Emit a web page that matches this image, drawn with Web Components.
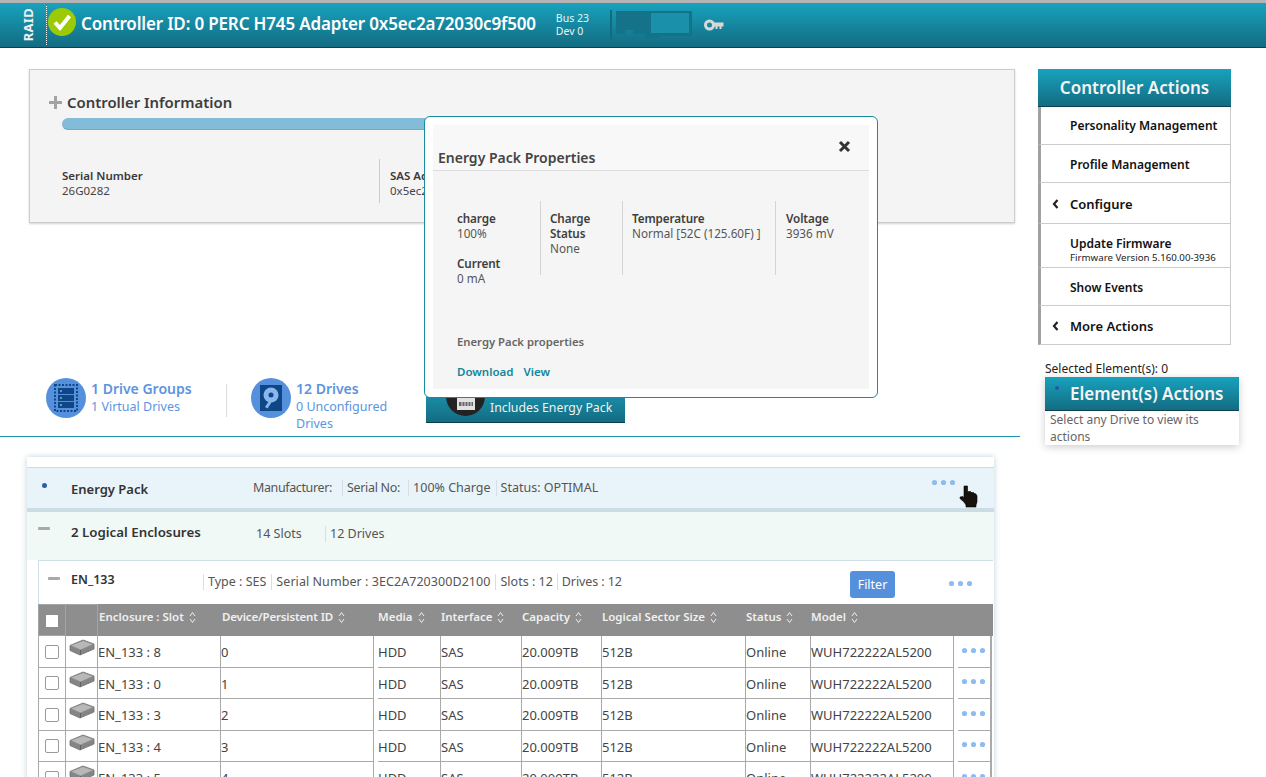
<!DOCTYPE html>
<html lang="en"><head><meta charset="utf-8"><title>RAID</title>
<style>
html,body{margin:0;padding:0;height:777px;overflow:hidden;background:#fff}
body{font-family:"Noto Sans","Open Sans",sans-serif;font-size:12.5px;color:#444;border-top:3px solid #b4b4b4;box-sizing:border-box}
</style></head><body>
<app-shell></app-shell>
<script>
const FONT='"Noto Sans","Open Sans",sans-serif';
function def(name,css,html,init){
  customElements.define(name,class extends HTMLElement{
    constructor(){super();const r=this.attachShadow({mode:'open'});
      r.innerHTML='<style>'+css+'</style>'+(typeof html==='function'?html(this):html);}
    connectedCallback(){
      if(typeof html==='function'){this.shadowRoot.innerHTML='<style>'+css+'</style>'+html(this);}
      if(init)init(this);}
  });
}
const dots=(c='#8fbcf0')=>`<svg width="25" height="7" viewBox="0 0 25 7"><circle cx="3.5" cy="3.5" r="2.6" fill="${c}"/><circle cx="12.5" cy="3.5" r="2.6" fill="${c}"/><circle cx="21.5" cy="3.5" r="2.6" fill="${c}"/></svg>`;
const sort=`<svg width="7" height="13" viewBox="0 0 7 13" fill="none" stroke="#eee" stroke-width="1"><path d="M1 5l2.5-3.500L6 5M1 8l2.500 3.500L6 8"/></svg>`;
const hdd=`<svg width="26" height="17" viewBox="0 0 26 17"><path d="M1 6.500L14 1l11 4v5L11 16 1 11.500z" fill="#858585" stroke="#707070" stroke-width=".8"/><path d="M1.500 6.500L14 1.500l10.500 3.700L11.500 11z" fill="#b8b8b8" stroke="#8a8a8a" stroke-width=".8"/><path d="M11.500 11v4.500" stroke="#5f5f5f"/></svg>`;

def('top-bar',`
:host{display:flex;align-items:center;height:45px;box-sizing:border-box;background:linear-gradient(#18a2bd,#136c82);border-bottom:1px solid #0b4252;color:#fff;font-family:${FONT}}
.raid{width:46px;flex:none;box-sizing:border-box;display:flex;justify-content:flex-end;padding-right:9px}
.raid span{writing-mode:vertical-rl;transform:rotate(180deg);font-size:13px;font-weight:700;letter-spacing:.3px;color:#f0f0f0}
.sep{align-self:stretch;margin:3px 0 2px;border-left:1px dotted #fff;margin-left:0}
svg.ok{margin:-7px 0 0 1px;flex:none}
h1{margin:0 0 4px 5px;font-size:17px;font-weight:600;letter-spacing:-.16px;white-space:nowrap}
.bus{margin-left:20px;font-size:10.5px;line-height:13px;width:54px;flex:none;color:#e8f4f7}
.card{flex:none}.key{margin-left:11px;flex:none}
`,`<div class="raid"><span>RAID</span></div><div class="sep"></div>
<svg class="ok" width="28" height="28" viewBox="0 0 28 28"><ellipse cx="14" cy="14" rx="14" ry="14" fill="#9ccb06"/><path d="M7 14.500l5 5.500 9.500-12" fill="none" stroke="#fff" stroke-width="4"/></svg>
<h1>Controller ID: 0 PERC H745 Adapter 0x5ec2a72030c9f500</h1>
<div class="bus">Bus 23<br>Dev 0</div>
<svg class="card" width="83" height="30" viewBox="0 0 83 30"><path d="M0 0h2v29H0z" fill="#146b80"/><path d="M6 1H82V26H50V28H35V24H23V20H15V24H6Z" fill="#157389"/><rect x="41" y="3" width="38" height="20" fill="#1a90aa"/></svg>
<svg class="key" width="20" height="12" viewBox="0 0 20 12"><circle cx="5.500" cy="6" r="4" fill="none" stroke="#d8d8d8" stroke-width="3"/><path d="M9 3.500h10.500v4h-2v2.500h-2V7.500h-2V10h-2V7.500H9z" fill="#d8d8d8"/></svg>`);

def('info-panel',`
:host{display:block;margin:21px 5px 0 29px;height:154px;box-sizing:border-box;background:#f4f4f4;border:1px solid #ccc;box-shadow:0 1px 2px rgba(0,0,0,.18);padding:22px 19px 0 19px}
h2{margin:0;font-size:14.900px;font-weight:600;color:#3d3d3d;display:flex;align-items:center;gap:5px;line-height:20px}
.bar{height:12px;border-radius:6px;background:#82bcd8;margin:6px 0 0 13px;width:760px;border-bottom:1px solid #6fa9c4;box-sizing:border-box}
.fields{display:flex;margin:29px 0 0 13px;height:44px}
.f{padding-top:9px;font-size:11.500px;line-height:15px;color:#444}
.f b{display:block;font-weight:600;color:#3a3a3a}
.a{width:317px;box-sizing:border-box}.b{border-left:1px solid #ccc;padding-left:10px}
`,`<h2><svg width="13" height="13" viewBox="0 0 13 13"><path d="M5 0h3v5h5v3H8v5H5V8H0V5h5z" fill="#a3a3a3"/></svg>Controller Information</h2>
<div class="bar"></div>
<div class="fields"><div class="f a"><b>Serial Number</b>26G0282</div><div class="f b"><b>SAS Address</b>0x5ec2a72030c9f500</div></div>`);

def('stat-block',`
:host{display:flex;gap:5px;font-family:${FONT};color:#5c94e0;font-size:12.500px;line-height:17px}
.t{width:var(--w,110px)}b{display:block;font-size:14px;font-weight:600;line-height:19px;margin-top:1px}
svg{flex:none}`,el=>`<slot name="icon"></slot><div class="t"><b>${el.getAttribute('title-text')}</b>${el.getAttribute('sub')}</div>`);

def('energy-button',`
:host{display:flex;align-items:center;height:28px;width:199px;box-sizing:border-box;background:linear-gradient(#1a8ea8,#136c82);border-bottom:1px solid #0a3d4c;color:#f2f2f2;font-size:12.300px;overflow:visible;position:relative}
.c{width:39px;height:39px;border-radius:50%;background:#232323;margin:-25px 5px 0 20px;flex:none;display:flex;justify-content:center;align-items:flex-end;padding-bottom:6px;box-sizing:border-box}
span{white-space:nowrap;margin-bottom:3px}`,`<div class="c"><svg width="18" height="20" viewBox="0 0 18 20"><rect x="0" y="0" width="18" height="20" fill="#e2e2e2"/><path d="M2 4h14v4H2zM2 12h14v4H2z" fill="#666"/><path d="M5 4v4M8 4v4M11 4v4M14 4v4M5 12v4M8 12v4M11 12v4M14 12v4" stroke="#ddd" stroke-width="1"/></svg></div><span>Includes Energy Pack</span>`);

def('prop-col',`
:host{display:block;box-sizing:border-box;font-size:11.700px;line-height:15px;color:#555;padding-top:10px}
:host([sep]){border-left:1px solid #d4d4d4;padding-left:9px}
::slotted(b){display:block;font-weight:600;color:#3e3e3e;letter-spacing:-.1px}`,`<slot></slot>`);

def('props-modal',`
:host{position:absolute;left:424px;top:113px;width:454px;height:282px;box-sizing:border-box;background:#fff;border:1px solid #1a8a9e;border-radius:6px;padding:8px;z-index:5;font-family:${FONT}}
.in{background:#f5f5f5;height:264px;display:flex;flex-direction:column}
header{height:45px;background:#f8f8f8;border-bottom:1px solid #ddd;display:flex;justify-content:space-between;align-items:flex-start;box-sizing:content-box}
h3{margin:23px 0 0 5px;font-size:14px;font-weight:600;color:#444;line-height:20px}
svg{margin:15px 18px 0 0}
.cols{display:flex;margin:30px 0 0 24px;align-items:flex-start;height:89px}
.c1{width:83px;height:89px}.c2{width:82px;height:74px}.c3{width:153px;height:74px}.c4{width:70px;height:74px}
.note{margin:44px 0 0 24px;font-size:11.300px;font-weight:600;color:#666;line-height:15px}
.links{margin:15px 0 0 24px;font-size:11.500px;font-weight:600;color:#12879c;display:flex;gap:10px;line-height:15px}
`,`<div class="in"><header><h3>Energy Pack Properties</h3><svg width="13" height="13" viewBox="0 0 13 13"><path d="M2 2l9 9M11 2l-9 9" stroke="#333" stroke-width="3"/></svg></header>
<div class="cols">
<prop-col class="c1"><b>charge</b>100%<br><br><b>Current</b>0 mA</prop-col>
<prop-col class="c2" sep><b>Charge Status</b>None</prop-col>
<prop-col class="c3" sep><b>Temperature</b>Normal [52C (125.60F) ]</prop-col>
<prop-col class="c4" sep style="padding-left:10px"><b>Voltage</b>3936 mV</prop-col>
</div>
<div class="note">Energy Pack properties</div>
<div class="links"><span>Download</span><span>View</span></div></div>`);

def('action-item',`
:host{display:flex;flex-direction:column;justify-content:center;box-sizing:border-box;border-left:3px solid #a0a0a0;border-right:1px solid #ccc;border-bottom:1px solid #ccc;padding:1px 0 0 29px;color:#111;font-size:12px;font-weight:600;position:relative;line-height:15px}
:host([big]){font-size:13px;padding-top:3px}
:host([sub]){padding-top:8px}
small{font-size:9.700px;font-weight:400;line-height:13px;display:block;color:#222}
svg{position:absolute;left:11px;top:50%;margin-top:-4px}
`,el=>`${el.hasAttribute('chev')?'<svg width="7" height="10" viewBox="0 0 7 10"><path d="M5.500 1L2 5l3.500 4" fill="none" stroke="#222" stroke-width="2.200"/></svg>':''}<div>${el.getAttribute('label')}</div>${el.getAttribute('sub')?`<small>${el.getAttribute('sub')}</small>`:''}`);

def('side-panel',`
:host{display:block;padding-top:21px;font-family:${FONT}}
.ca{width:193px;margin-left:18px}
.h{height:38px;background:linear-gradient(#18a2bd,#136c82);border-bottom:1px solid #0b4252;box-sizing:border-box;color:#f4f4f4;font-size:17px;font-weight:600;display:flex;align-items:center;justify-content:center}
.sel{margin:15px 0 0 25px;font-size:12px;line-height:17px;color:#222;height:17px}
.ea{margin:0 0 0 25px;width:194px;box-shadow:0 2px 8px rgba(0,0,0,.2);background:#fff}
.eh{height:34px;background:linear-gradient(#18a2bd,#136c82);border-bottom:1px solid #0b4252;box-sizing:border-box;color:#f4f4f4;font-size:17px;font-weight:600;display:flex;align-items:center;padding-left:25px;position:relative}
.eh i{position:absolute;left:10px;top:9px;width:4px;height:4px;border-radius:50%;background:#2c55a8}
.eb{padding:0 5px;font-size:12px;line-height:17px;color:#666;height:34px;width:170px;box-sizing:content-box}
`,`<div class="ca"><div class="h">Controller Actions</div>
<action-item style="height:38px;padding-top:0" label="Personality Management"></action-item>
<action-item style="height:38px" label="Profile Management"></action-item>
<action-item big chev style="height:41px" label="Configure"></action-item>
<action-item style="height:44px" label="Update Firmware" sub="Firmware Version 5.160.00-3936"></action-item>
<action-item style="height:38px" label="Show Events"></action-item>
<action-item big chev style="height:39px" label="More Actions"></action-item></div>
<div class="sel">Selected Element(s): 0</div>
<div class="ea"><div class="eh"><i></i>Element(s) Actions</div><div class="eb">Select any Drive to view its actions</div></div>`);

const COLS='28px 32px 123px 157px 63px 81px 80px 144px 65px 147px 34px';
def('table-head',`
:host{display:grid;grid-template-columns:${COLS};height:32px;background:#8e8e8e;color:#f0f0f0;font-size:11.500px;font-weight:600}
div{display:flex;align-items:flex-start;gap:5px;padding:4px 0 0 0;line-height:18px;white-space:nowrap;box-sizing:border-box}
.cb{border:1px solid #a4a4a4;padding:0;justify-content:center;align-items:center}
.ic{border-right:1px solid #a4a4a4;border-top:1px solid #a4a4a4}
i{width:12px;height:12px;background:#fff;display:block;margin-top:1px}
svg{margin-top:3px}.p{padding-left:1px}
.dev{letter-spacing:-.15px}
`,()=>{const c=[['Enclosure : Slot','p'],['Device/Persistent ID','p dev'],['Media'],['Interface'],['Capacity'],['Logical Sector Size'],['Status'],['Model']];
return `<div class="cb"><i></i></div><div class="ic"></div>`+c.map(x=>`<div class="${x[1]||''}">${x[0]}${sort}</div>`).join('')+'<div></div>';});

def('drive-row',`
:host{display:grid;grid-template-columns:${COLS};height:31.500px;color:#444;font-size:13px;background:#fff}
div{box-sizing:border-box;border-bottom:1px solid #aaa;border-right:1px solid #aaa;display:flex;align-items:center;padding:2px 0 0 0;white-space:nowrap;min-width:0}
.cb{border-left:1px solid #aaa;justify-content:center;padding:0}
.cb i{width:12px;height:12px;border:1px solid #999;border-radius:2px;background:#fff;display:block;margin-top:1px}
.ic{padding:3px 0 0;align-items:flex-start;justify-content:center}
.gap{margin-right:4px}
.d{justify-content:flex-start;border-right:2px solid #aaa;padding:0 0 2px 3px}
`,el=>{const [s,i]=[el.getAttribute('slot-no'),el.getAttribute('dev')];
return `<div class="cb"><i></i></div><div class="ic">${hdd}</div><div>EN_133 : ${s}</div><div class="gap">${i}</div><div>HDD</div><div>SAS</div><div>20.009TB</div><div>512B</div><div>Online</div><div class="gap">WUH722222AL5200</div><div class="d">${dots()}</div>`;});

def('drive-card',`
:host{display:block;margin:20px 0 0 27px;width:967px;box-shadow:0 0 6px rgba(120,150,170,.45);padding-top:10px;font-family:${FONT};background:#fff}
.ep{height:45px;box-sizing:border-box;background:#e9f4fa;border-top:1px solid #c8dde6;border-bottom:4px solid #cbdce4;display:flex;align-items:center;position:relative;font-size:12.500px;color:#555}
.ep i{position:absolute;left:15px;top:15px;width:5px;height:5px;border-radius:50%;background:#2c5ea8}
.nm{font-size:13px;font-weight:600;color:#333;position:absolute;left:44px}
.meta{position:absolute;display:flex;white-space:nowrap;line-height:16px}
.meta span+span{border-left:1px solid #d5dfe5;margin-left:5px;padding-left:4px}
.menu{position:absolute;display:flex}
.le{height:48px;background:#f0f9f6;position:relative;font-size:12.500px;color:#555;box-sizing:border-box}
.min{position:absolute;width:12px;height:3px;background:#a9a9a9;border-radius:1px}
.en{margin:0 1px 0 11px;background:#f0f9f6}
.er{height:44px;background:#fff;border:1px solid #cfe0e8;border-bottom:none;border-right:none;position:relative;box-sizing:border-box;font-size:12.500px;color:#555}
.fb{position:absolute;left:811px;top:10px;width:45px;height:27px;background:#5590dd;border-radius:3px;color:#fff;font-size:12.500px;display:flex;align-items:center;justify-content:center}
svg.hand{position:absolute;left:932px;top:17px;z-index:3}
`,`<div class="ep"><i></i><span class="nm" style="top:12px">Energy Pack</span>
<div class="meta" style="left:226px;top:12px"><span style="letter-spacing:-.38px;margin-right:10px">Manufacturer:</span><span style="letter-spacing:-.3px;margin-left:0;margin-right:8px">Serial No:</span><span style="margin-left:0">100% Charge</span><span>Status: OPTIMAL</span></div>
<div class="menu" style="left:904px;top:11px">${dots()}</div>
<svg class="hand" width="19" height="23" viewBox="0 0 19 23"><path d="M5 1h3.500v6l1-.5h2l1 1h2l1 1 1.500.5 1 2V17l-1 3v2H7v-2l-2-3-4-3.500V12l3-.5 1 1.500z" fill="#16120e" stroke="#000" stroke-width=".6"/></svg></div>
<div class="le"><div class="min" style="left:11px;top:15px"></div><span class="nm" style="top:11px;font-size:13.300px">2 Logical Enclosures</span>
<div class="meta" style="left:229px;top:14px"><span style="width:64px">14 Slots</span><span>12 Drives</span></div></div>
<div class="en"><div class="er"><div class="min" style="left:9px;top:16px"></div><span class="nm" style="left:32px;top:10px;font-size:12.500px">EN_133</span>
<div class="meta" style="left:164px;top:13px"><span style="border-left:1px solid #d5dfe5;padding-left:4px">Type : SES</span><span style="letter-spacing:.06px">Serial Number : 3EC2A720300D2100</span><span>Slots : 12</span><span style="letter-spacing:-.1px;margin-left:4px">Drives : 12</span></div>
<div class="fb">Filter</div><div class="menu" style="left:909px;top:19px">${dots()}</div></div>
<table-head></table-head>
<drive-row slot-no="8" dev="0"></drive-row><drive-row slot-no="0" dev="1"></drive-row><drive-row slot-no="3" dev="2"></drive-row><drive-row slot-no="4" dev="3"></drive-row><drive-row slot-no="5" dev="4"></drive-row>
</div>`);

def('app-shell',`
:host{display:block;position:relative;height:774px;overflow:hidden;font-family:${FONT}}
.main{display:grid;grid-template-columns:1020px 1fr}
.stats{display:flex;margin:155px 0 0 46px;height:58px;align-items:flex-start;position:relative}
.dv{width:1px;height:33px;background:#ddd;margin:6px 24px 0 25px}
.hr{border-top:1px solid #1a94aa}
energy-button{position:absolute;left:380px;top:17px}
`,`<top-bar></top-bar><div class="main"><div><info-panel></info-panel>
<div class="stats">
<stat-block title-text="1 Drive Groups" sub="1 Virtual Drives" style="--w:110px"><svg slot="icon" width="40" height="40" viewBox="0 0 40 40"><circle cx="20" cy="20" r="20" fill="#5590dd"/><rect x="9" y="7" width="22" height="26" fill="none" stroke="#0f4786" stroke-width="2" stroke-dasharray="2 1.500"/><path d="M12 10h16v6H12zM12 17h16v6H12zM12 24h16v6H12z" fill="#0f4786"/><circle cx="15" cy="13" r="1" fill="#7fb0ea"/><circle cx="15" cy="20" r="1" fill="#7fb0ea"/><circle cx="15" cy="27" r="1" fill="#7fb0ea"/></svg></stat-block>
<div class="dv"></div>
<stat-block title-text="12 Drives" sub="0 Unconfigured Drives" style="--w:105px"><svg slot="icon" width="40" height="40" viewBox="0 0 40 40"><circle cx="20" cy="20" r="20" fill="#5590dd"/><rect x="9" y="7" width="22" height="26" fill="#0f4786"/><circle cx="20" cy="17" r="7.500" fill="#8ab8ee"/><circle cx="20" cy="17" r="2.500" fill="#0f4786"/><path d="M18 23l-4 6 2.500 1.500 4-6z" fill="#8ab8ee"/></svg></stat-block>
<energy-button></energy-button>
</div><div class="hr"></div>
<drive-card></drive-card></div><side-panel></side-panel></div><props-modal></props-modal>`);
</script>
</body></html>
